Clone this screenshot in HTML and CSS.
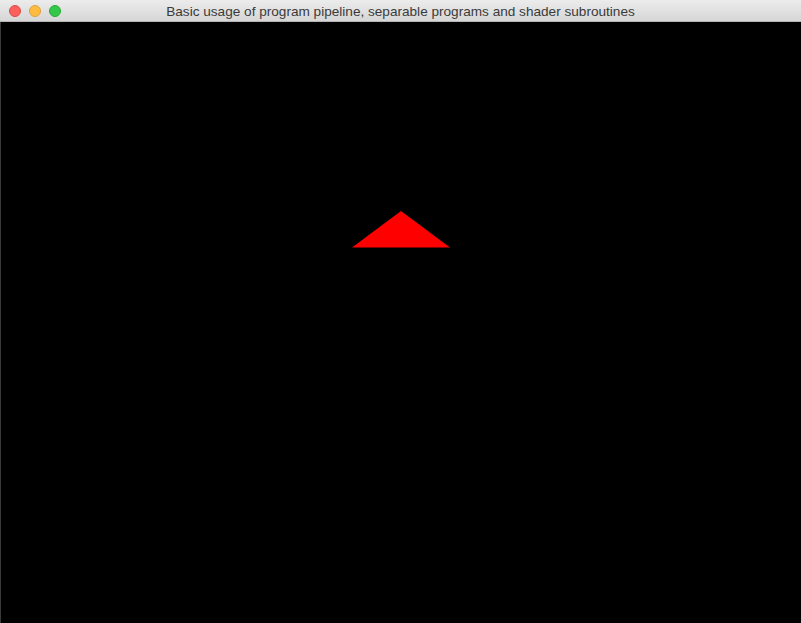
FILE: index.html
```html
<!DOCTYPE html>
<html>
<head>
<meta charset="utf-8">
<link rel="stylesheet" href="styles.css">
</head>
<body>
<div class="window">
  <div class="titlebar">
    <div class="lights">
      <span class="light red"></span>
      <span class="light yellow"></span>
      <span class="light green"></span>
    </div>
    <div class="title">Basic usage of program pipeline, separable programs and shader subroutines</div>
  </div>
  <div class="canvas">
    <svg class="scene" width="801" height="601" viewBox="0 0 801 601">
      <polygon points="401,189 352,225.5 450,225.5" fill="#ff0000"/>
    </svg>
  </div>
</div>
</body>
</html>
```
FILE: styles.css
```css
html, body {
  margin: 0;
  padding: 0;
  background: #000;
  width: 801px;
  height: 623px;
  overflow: hidden;
}
.window {
  width: 801px;
  height: 623px;
  display: flex;
  flex-direction: column;
}
.titlebar {
  height: 22px;
  flex: 0 0 22px;
  box-sizing: border-box;
  background: linear-gradient(#ececec, #d6d6d6);
  border-bottom: 1px solid #b4b4b4;
  display: flex;
  align-items: center;
  position: relative;
}
.lights {
  display: flex;
  gap: 8px;
  padding-left: 9px;
  position: relative;
  z-index: 1;
}
.light {
  width: 12px;
  height: 12px;
  border-radius: 50%;
  box-sizing: border-box;
}
.red { background: #fc605b; border: 0.5px solid #de4a45; }
.yellow { background: #fdbc40; border: 0.5px solid #dea236; }
.green { background: #34c84a; border: 0.5px solid #27aa35; }
.title {
  position: absolute;
  left: 0;
  right: 0;
  top: 0;
  height: 22px;
  line-height: 23px;
  text-align: center;
  font-family: "Liberation Sans", Arial, sans-serif;
  font-size: 13.6px;
  color: #3a3a3a;
}
.canvas {
  flex: 1;
  background: #000;
  display: flex;
  border-left: 1px solid #3a3a3a;
}
.scene {
  display: block;
  margin-left: -1px;
}
```
